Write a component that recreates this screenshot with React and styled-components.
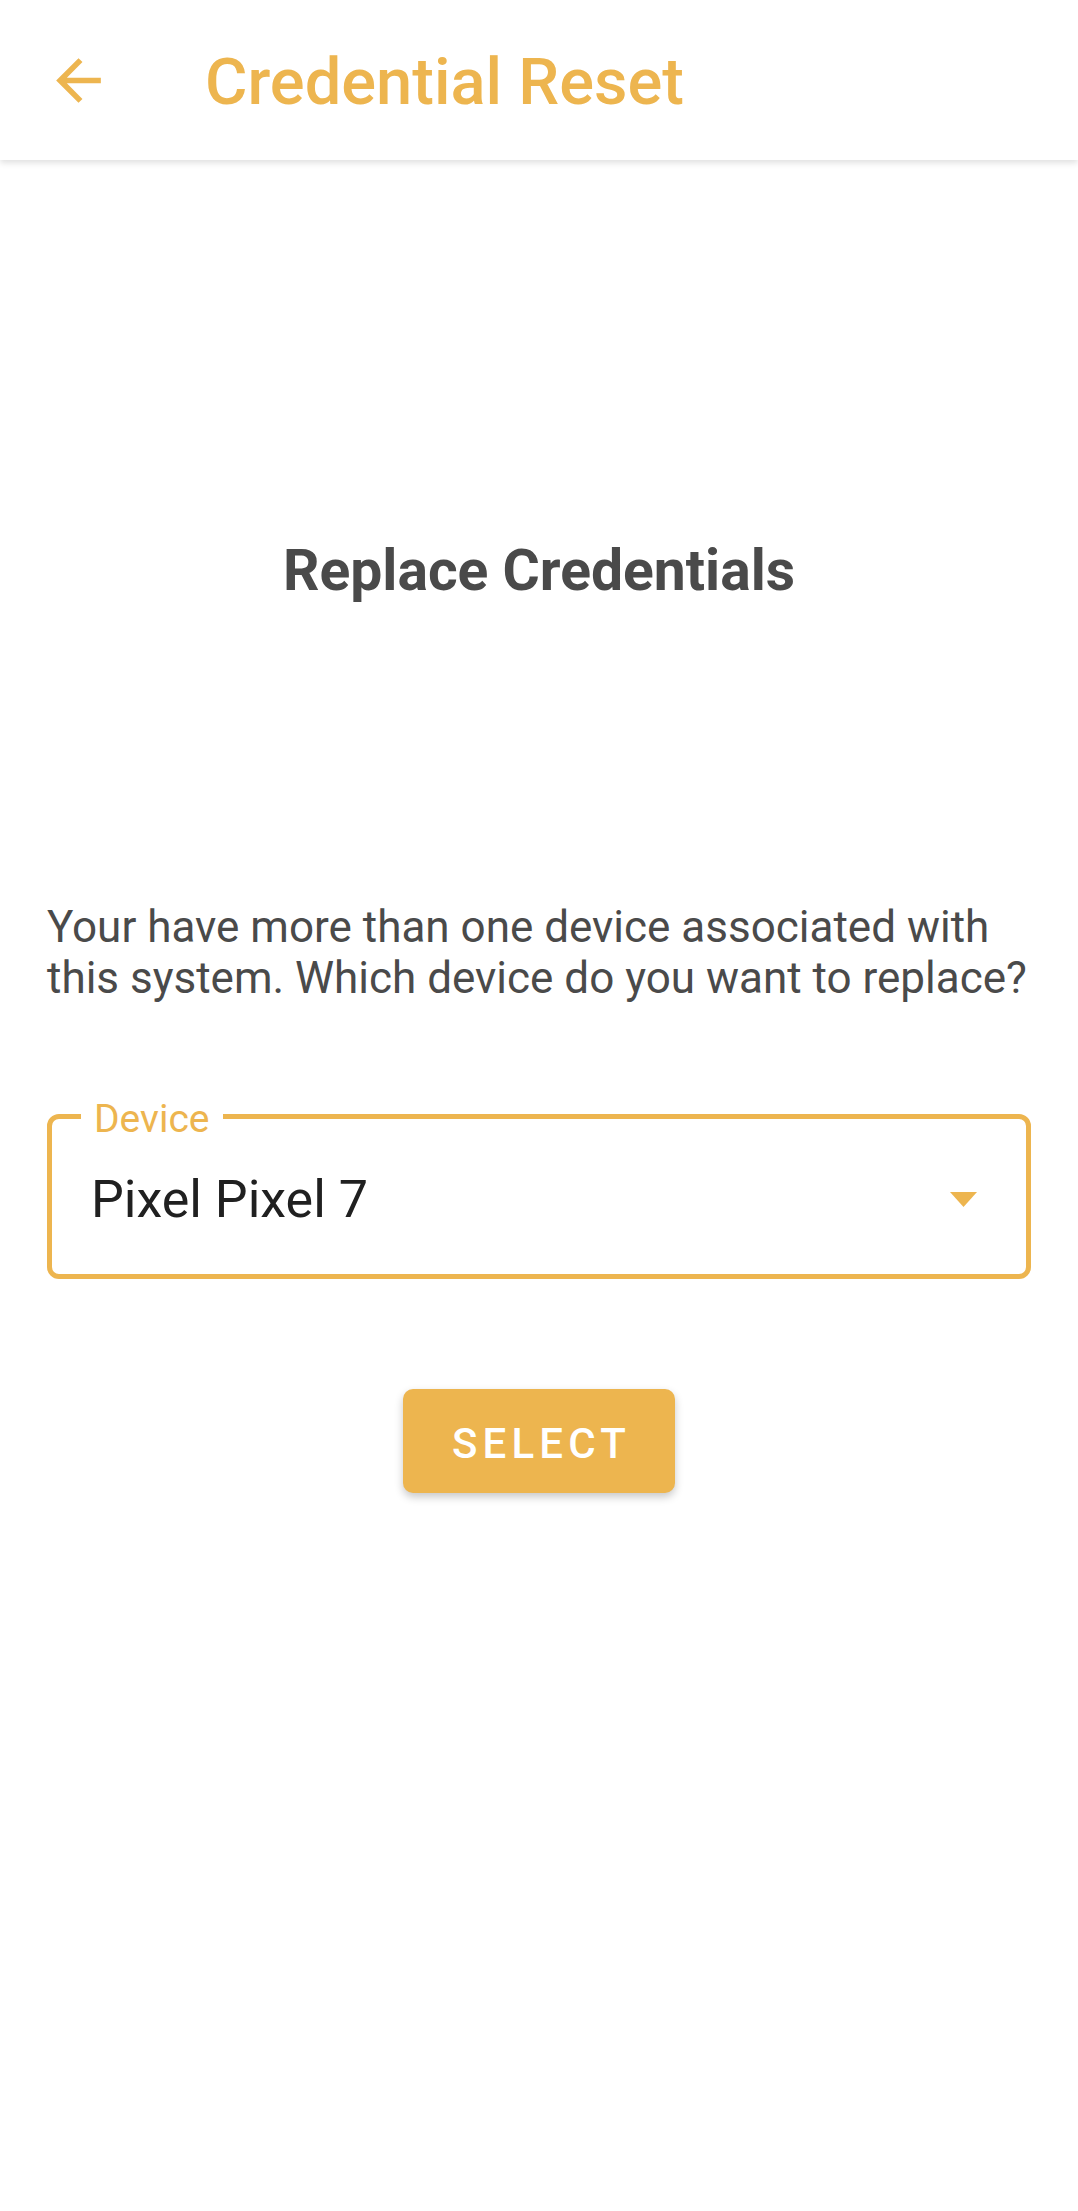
import styled, { createGlobalStyle } from 'styled-components';

const accent = '#EDB54F';

const GlobalStyle = createGlobalStyle`
  body {
    margin: 0;
    background: #fff;
    font-family: Roboto, 'Noto Sans', 'Liberation Sans', sans-serif;
  }
`;

const Screen = styled.div`
  min-height: 2211px;
  background: #fff;
`;

const AppBar = styled.header`
  display: flex;
  align-items: center;
  height: 160px;
  padding-left: 45px;
  background: #fff;
  box-shadow: 0 3px 6px rgba(0, 0, 0, 0.12);
  position: relative;
  z-index: 1;
`;

const BackButton = styled.button`
  display: flex;
  padding: 0;
  border: none;
  background: none;
  color: ${accent};
  svg {
    width: 67px;
    height: 67px;
    fill: currentColor;
  }
`;

const AppTitle = styled.h1`
  margin: 0 0 0 93px;
  padding-top: 4px;
  font-size: 65px;
  font-weight: 500;
  color: ${accent};
`;

const Content = styled.main`
  display: flex;
  flex-direction: column;
  padding: 0 47px;
`;

const Heading = styled.h2`
  margin: 377px 0 0;
  font-size: 57px;
  line-height: 68px;
  font-weight: 700;
  text-align: center;
  color: #4a4a4a;
`;

const Message = styled.p`
  margin: 297px 0 0;
  font-size: 44px;
  line-height: 51px;
  color: #4a4a4a;
`;

const Field = styled.div`
  position: relative;
  display: flex;
  align-items: center;
  box-sizing: border-box;
  height: 165px;
  margin-top: 110px;
  padding: 6px 49px 0 39px;
  border: 5px solid ${accent};
  border-radius: 12px;
`;

const FieldLabel = styled.span`
  position: absolute;
  top: -20px;
  left: 29px;
  padding: 0 13px;
  background: #fff;
  font-size: 39px;
  line-height: 40px;
  color: ${accent};
`;

const FieldValue = styled.span`
  flex: 1;
  font-size: 52px;
  line-height: 62px;
  color: #202020;
`;

const Caret = styled.svg`
  width: 27px;
  height: 15px;
  fill: ${accent};
`;

const Actions = styled.div`
  display: flex;
  justify-content: center;
  margin-top: 110px;
`;

const PrimaryButton = styled.button`
  display: flex;
  align-items: center;
  justify-content: center;
  width: 272px;
  height: 104px;
  padding: 5px 0 0 5px;
  border: none;
  border-radius: 10px;
  background: ${accent};
  box-shadow: 0 4px 8px rgba(0, 0, 0, 0.22);
  color: #fff;
  font-family: inherit;
  font-size: 42px;
  font-weight: 500;
  letter-spacing: 5.2px;
`;

export default function App() {
  return (
    <Screen>
      <GlobalStyle />
      <AppBar>
        <BackButton aria-label="Back">
          <svg viewBox="0 0 24 24">
            <path d="M20 11H7.83l5.59-5.59L12 4l-8 8 8 8 1.41-1.41L7.83 13H20v-2z" />
          </svg>
        </BackButton>
        <AppTitle>Credential Reset</AppTitle>
      </AppBar>
      <Content>
        <Heading>Replace Credentials</Heading>
        <Message>
          Your have more than one device associated with this system. Which device do you want to replace?
        </Message>
        <Field>
          <FieldLabel>Device</FieldLabel>
          <FieldValue>Pixel Pixel 7</FieldValue>
          <Caret viewBox="0 0 27 15">
            <path d="M0 0h27L13.5 15z" />
          </Caret>
        </Field>
        <Actions>
          <PrimaryButton>SELECT</PrimaryButton>
        </Actions>
      </Content>
    </Screen>
  );
}
